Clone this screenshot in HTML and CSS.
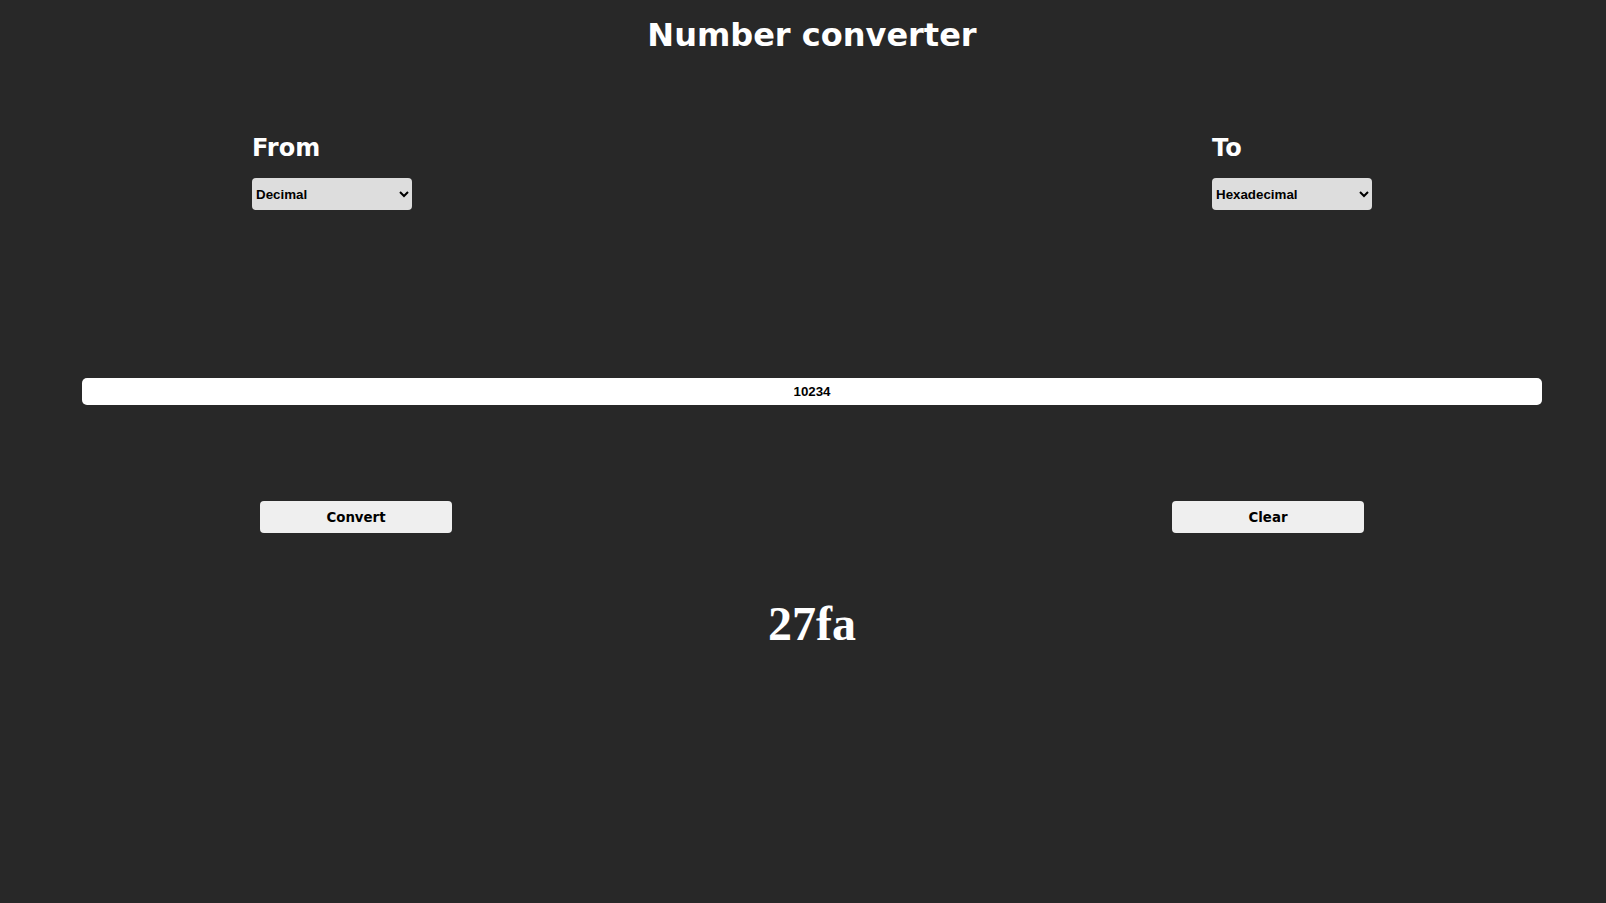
FILE: index.html
```html
<!DOCTYPE html>
<html lang="en">
<head>
<meta charset="utf-8">
<title>Number converter</title>
<link rel="stylesheet" href="styles.css">
</head>
<body>
<main class="page">
  <h1 class="title">Number converter</h1>
  <section class="selectors">
    <div class="col">
      <h2 class="label">From</h2>
      <select class="base-select">
        <option selected>Decimal</option>
        <option>Binary</option>
        <option>Octal</option>
        <option>Hexadecimal</option>
      </select>
    </div>
    <div class="col">
      <h2 class="label">To</h2>
      <select class="base-select">
        <option>Decimal</option>
        <option>Binary</option>
        <option>Octal</option>
        <option selected>Hexadecimal</option>
      </select>
    </div>
  </section>
  <div class="input-row">
    <input class="number-input" type="text" value="10234">
  </div>
  <div class="buttons">
    <button class="btn">Convert</button>
    <button class="btn">Clear</button>
  </div>
  <div class="result">27fa</div>
</main>
</body>
</html>
```
FILE: styles.css
```css
html, body {
  margin: 0;
  padding: 0;
  background: #282828;
  color: #ffffff;
}
.page {
  padding-left: 18px;
  font-family: "DejaVu Sans", sans-serif;
}
.title {
  margin: 17px 0 0;
  font-size: 32px;
  line-height: 37px;
  font-weight: bold;
  text-align: center;
}
.selectors {
  display: flex;
  justify-content: space-between;
  padding: 0 234px;
  margin-top: 80px;
}
.col {
  display: flex;
  flex-direction: column;
  width: 160px;
}
.label {
  margin: 0;
  font-size: 24px;
  line-height: 28px;
  font-weight: bold;
}
.base-select {
  margin-top: 16px;
  width: 160px;
  height: 32px;
  background-color: #dddddd;
  color: #000;
  border: none;
  border-radius: 4px;
  font-family: "Liberation Sans", Arial, sans-serif;
  font-weight: bold;
  font-size: 13.33px;
  padding: 0;
}
.input-row {
  margin-top: 168px;
  padding: 0 64px;
}
.number-input {
  display: block;
  width: 100%;
  box-sizing: border-box;
  height: 27px;
  border: none;
  border-radius: 5px;
  background: #ffffff;
  color: #000;
  text-align: center;
  font-family: "Liberation Sans", Arial, sans-serif;
  font-weight: bold;
  font-size: 13.33px;
  padding: 0;
}
.buttons {
  display: flex;
  justify-content: space-between;
  padding: 0 242px;
  margin-top: 96px;
}
.btn {
  width: 192px;
  height: 32px;
  border: none;
  border-radius: 4px;
  background: #efefef;
  color: #000;
  font-family: "DejaVu Sans", sans-serif;
  font-weight: bold;
  font-size: 13.33px;
  padding: 0;
}
.result {
  margin-top: 63px;
  text-align: center;
  font-family: "Liberation Serif", "Times New Roman", serif;
  font-weight: bold;
  font-size: 48px;
  line-height: 55px;
}
```
